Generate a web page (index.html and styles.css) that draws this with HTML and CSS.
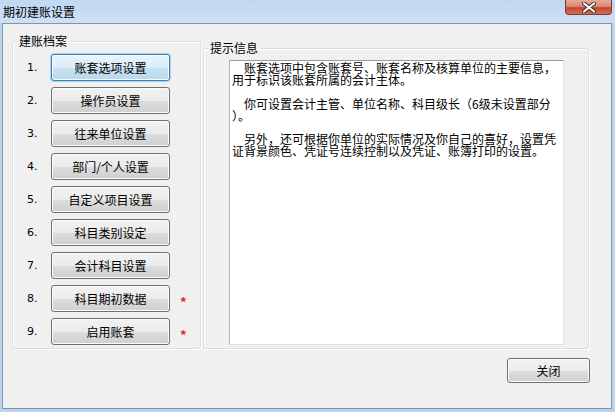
FILE: index.html
```html
<!DOCTYPE html>
<html>
<head>
    <title>期初建账设置</title>
    <link rel="stylesheet" href="styles.css">
</head>
<body>
    <div class="window">
        <div class="titlebar">
            <span class="title">期初建账设置</span>
            <button class="close-btn" aria-label="关闭">
                <svg width="14" height="11" viewBox="0 0 14 11">
                    <path d="M2 1.5 L12 9.5 M12 1.5 L2 9.5" stroke="#3a2a2a" stroke-width="4" stroke-linecap="round"/>
                    <path d="M2 1.5 L12 9.5 M12 1.5 L2 9.5" stroke="#ffffff" stroke-width="2.2" stroke-linecap="round"/>
                </svg>
            </button>
        </div>

        <div class="client">
            <div class="groups">
                <fieldset class="group group-steps">
                    <legend>建账档案</legend>
                    <ol class="steps">
                        <li class="step"><span class="step-no">1.</span><button class="btn btn-focus">账套选项设置</button></li>
                        <li class="step"><span class="step-no">2.</span><button class="btn">操作员设置</button></li>
                        <li class="step"><span class="step-no">3.</span><button class="btn">往来单位设置</button></li>
                        <li class="step"><span class="step-no">4.</span><button class="btn">部门/个人设置</button></li>
                        <li class="step"><span class="step-no">5.</span><button class="btn">自定义项目设置</button></li>
                        <li class="step"><span class="step-no">6.</span><button class="btn">科目类别设定</button></li>
                        <li class="step"><span class="step-no">7.</span><button class="btn">会计科目设置</button></li>
                        <li class="step"><span class="step-no">8.</span><button class="btn">科目期初数据</button><span class="required">*</span></li>
                        <li class="step"><span class="step-no">9.</span><button class="btn">启用账套</button><span class="required">*</span></li>
                    </ol>
                </fieldset>

                <fieldset class="group group-tips">
                    <legend>提示信息</legend>
                    <div class="tips">
                        <p>　账套选项中包含账套号、账套名称及核算单位的主要信息，<br>用于标识该账套所属的会计主体。</p>
                        <p>　你可设置会计主管、单位名称、科目级长（6级未设置部分<br>）。</p>
                        <p>　另外，还可根据你单位的实际情况及你自己的喜好，设置凭<br>证背景颜色、凭证号连续控制以及凭证、账簿打印的设置。</p>
                    </div>
                </fieldset>
            </div>

            <div class="footer">
                <button class="btn btn-close">关闭</button>
            </div>
        </div>
    </div>
</body>
</html>
```

FILE: styles.css
```css
/* Dialog window */
body {
    margin: 0;
    font-family: "Noto Sans CJK SC", "Liberation Sans", sans-serif;
    font-size: 12px;
    color: #000;
}

.window {
    width: 615px;
    height: 412px;
    display: flex;
    flex-direction: column;
    box-sizing: border-box;
    padding: 0 3px 3px 2px;
    background: #bcd3ec;
}

.titlebar {
    height: 23px;
    display: flex;
    justify-content: space-between;
    align-items: flex-start;
    margin: 0 -3px 0 -2px;
    padding-left: 3px;
    background: linear-gradient(#c0d8f2, #cde0f5);
}

.title {
    line-height: 23px;
    font-size: 12px;
}

.close-btn {
    width: 47px;
    height: 15px;
    margin-right: 3px;
    padding: 0;
    border: 1px solid #7a3a30;
    border-top: none;
    border-radius: 0 0 4px 4px;
    background: linear-gradient(#e9a898 0%, #d98a78 45%, #c6432d 55%, #d0705c 100%);
    display: flex;
    align-items: center;
    justify-content: center;
}

.client {
    flex: 1;
    display: flex;
    flex-direction: column;
    background: #f0f0f0;
    border: 1px solid #8096ad;
}

.groups {
    display: flex;
    align-items: stretch;
    gap: 2px;
    height: 325px;
    padding: 10px 0 0 9px;
    box-sizing: border-box;
}

.group {
    margin: 0;
    padding: 0;
    border: 1px solid #d5dfe5;
    border-radius: 3px;
    box-shadow: inset 1px 1px 0 #fff, 1px 1px 0 #fff;
    box-sizing: border-box;
}

.group legend {
    margin-left: 4px;
    padding: 0 2px;
    line-height: 14px;
    font-size: 12px;
}

.group-steps {
    width: 189px;
}

.group-tips {
    width: 386px;
    margin-top: 7px;
}

/* Step list */
.steps {
    list-style: none;
    margin: 0;
    padding: 6px 0 0 14px;
    display: flex;
    flex-direction: column;
    gap: 6px;
}

.step {
    display: flex;
    align-items: center;
    height: 27px;
}

.step-no {
    width: 24px;
    font-family: "DejaVu Sans", sans-serif;
    font-size: 11px;
}

.required {
    margin-left: 10px;
    padding-top: 6px;
    color: #e8202a;
    font-weight: bold;
    font-size: 13px;
}

.btn {
    width: 119px;
    height: 27px;
    padding: 0;
    font-family: "Noto Sans CJK SC", sans-serif;
    font-size: 12px;
    color: #000;
    border: 1px solid #707070;
    border-radius: 3px;
    background: linear-gradient(#f2f2f2 0%, #ebebeb 50%, #dddddd 51%, #cfcfcf 100%);
    box-shadow: inset 0 0 0 1px #fbfbfb;
}

.btn-focus {
    border-color: #3c7fb1;
    background: linear-gradient(#eaf4fb 0%, #dcecf8 50%, #c8e2f2 51%, #b8d8ec 100%);
    box-shadow: inset 0 0 0 1px #f4fbff, 0 0 0 1px #a6d4f2;
}

/* Tips box */
.tips {
    width: 335px;
    height: 285px;
    margin: 5px 0 0 25px;
    box-sizing: border-box;
    padding: 1px 0 0 2px;
    background: #fff;
    border: 1px solid #e3e3e3;
    border-top-color: #9c9c9c;
    border-left-color: #b4b4b4;
    white-space: nowrap;
    line-height: 12px;
    font-size: 12px;
}

.tips p {
    margin: 0 0 11.5px;
}

.footer {
    display: flex;
    justify-content: flex-end;
    padding: 9px 21px 0 0;
}

.btn-close {
    width: 83px;
    height: 25px;
}
```
